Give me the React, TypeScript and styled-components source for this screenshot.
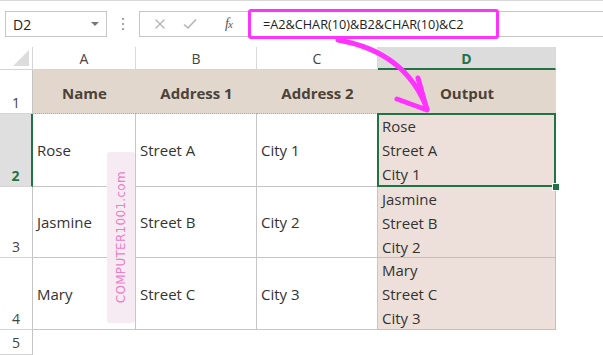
import React from 'react';
import styled, { createGlobalStyle, css } from 'styled-components';

const GREEN = '#217346';
const MAGENTA = '#ff33ff';

const GlobalStyle = createGlobalStyle`
  html, body { margin: 0; padding: 0; background: #fff; }
  body { width: 603px; height: 355px; overflow: hidden; font-family: "Open Sans", "Noto Sans", sans-serif; }
  * { box-sizing: border-box; }
`;

const Page = styled.div`
  position: relative;
  width: 603px;
  height: 355px;
  overflow: hidden;
  background: #fff;
  border-top: 1px solid #d8d8d8;
`;

const FormulaBar = styled.div`
  display: flex;
  align-items: flex-start;
  height: 46px;
  padding: 10px 0 0 5px;
`;

const NameBox = styled.div`
  width: 102px;
  height: 26px;
  border: 1px solid #c6c6c6;
  display: flex;
  align-items: center;
  justify-content: space-between;
  padding: 0 7px 0 7px;
  font-size: 14px;
  color: #222;
`;

const DropArrow = styled.span`
  width: 0;
  height: 0;
  border-left: 4px solid transparent;
  border-right: 4px solid transparent;
  border-top: 4px solid #777;
`;

const Grip = styled.div`
  width: 32px;
  height: 26px;
  display: flex;
  flex-direction: column;
  align-items: center;
  justify-content: center;
  gap: 3px;
`;

const GripDot = styled.span`
  width: 2px;
  height: 2px;
  background: #a6a6a6;
`;

const FxBox = styled.div`
  width: 109px;
  height: 26px;
  border: 1px solid #c6c6c6;
  border-right: none;
  display: flex;
  align-items: center;
  padding-left: 14px;
  gap: 17px;
`;

const FxLabel = styled.span`
  font-family: "Liberation Serif", "DejaVu Serif", serif;
  font-style: italic;
  font-size: 14px;
  color: #555;
  margin-left: 11px;
  letter-spacing: -1px;
`;

const FxSub = styled.span`
  font-size: 11px;
`;

const FormulaField = styled.div`
  flex: 1;
  height: 26px;
  border-top: 1px solid #c6c6c6;
  border-bottom: 1px solid #c6c6c6;
  display: flex;
  align-items: flex-start;
`;

const Highlight = styled.div`
  width: 251px;
  height: 30px;
  margin-top: -3px;
  border: 3px solid ${MAGENTA};
  border-radius: 3px;
  display: flex;
  align-items: center;
  padding-left: 12px;
  font-size: 12.7px;
  color: #222;
  white-space: nowrap;
`;

const Sheet = styled.div`
  display: grid;
  grid-template-columns: 33px 103px 121px 121px 178px 1fr;
  grid-template-rows: 23px 44px 73px 71px 72px 1fr;
  height: 308px;
`;

const Corner = styled.div`
  border-right: 1px solid #d4d4d4;
  border-bottom: 1px solid #d4d4d4;
  display: flex;
  align-items: flex-end;
  justify-content: flex-end;
  padding: 0 3px 3px 0;
`;

const CornerTri = styled.span`
  width: 0;
  height: 0;
  border-left: 16px solid transparent;
  border-bottom: 16px solid #dcdcdc;
`;

const ColHeader = styled.div<{ $selected?: boolean }>`
  border-right: 1px solid #d9d9d9;
  border-bottom: 1px solid #d4d4d4;
  display: flex;
  align-items: center;
  justify-content: center;
  font-size: 14px;
  color: #444;
  ${(p) =>
    p.$selected &&
    css`
      background: #dcdcdc;
      border-bottom: 2px solid ${GREEN};
      color: ${GREEN};
      font-weight: 700;
      padding-top: 1px;
    `}
`;

const BlankHeader = styled.div``;

const RowHeader = styled.div<{ $selected?: boolean; $center?: boolean }>`
  border-right: 1px solid #c4c4c4;
  border-bottom: 1px solid #d4d4d4;
  display: flex;
  justify-content: center;
  align-items: ${(p) => (p.$center ? 'center' : 'flex-end')};
  padding-bottom: ${(p) => (p.$center ? '0' : '1px')};
  font-size: 14px;
  color: #444;
  ${(p) =>
    p.$selected &&
    css`
      background: #dfdfdf;
      border-right: 2px solid ${GREEN};
      color: ${GREEN};
      font-weight: 700;
    `}
`;

const HeadCell = styled.div`
  background: #e2d7cd;
  border-bottom: 1px dotted #a9a9a9;
  display: flex;
  align-items: center;
  justify-content: center;
  font-size: 15px;
  font-weight: 700;
  color: #4b4238;
  padding-top: 2px;
`;

const Cell = styled.div`
  border-right: 1px solid #c6c6c6;
  border-bottom: 1px solid #c6c6c6;
  display: flex;
  align-items: center;
  padding-left: 4px;
  font-size: 15px;
  color: #333;
`;

const OutputCell = styled.div<{ $active?: boolean }>`
  position: relative;
  background: #ede0db;
  border-right: 1px solid #c0c0c0;
  border-bottom: 1px solid #c0c0c0;
  padding: 0 4px;
  font-size: 15px;
  line-height: 24px;
  color: #333;
  ${(p) =>
    p.$active &&
    css`
      z-index: 2;
      &::after {
        content: '';
        position: absolute;
        inset: -1px -1px -1px -1px;
        border: 2px solid ${GREEN};
        pointer-events: none;
      }
    `}
`;

const FillHandle = styled.span`
  position: absolute;
  right: -4px;
  bottom: -4px;
  width: 6px;
  height: 6px;
  background: ${GREEN};
  outline: 1px solid #fff;
  z-index: 3;
`;

const Line = styled.div`
  white-space: nowrap;
`;

const Empty = styled.div``;

const Watermark = styled.div`
  position: absolute;
  left: 107px;
  top: 151px;
  width: 28px;
  height: 171px;
  background: #f6eaf3;
  border-radius: 3px;
  display: flex;
  align-items: center;
  justify-content: center;
`;

const WatermarkText = styled.span`
  writing-mode: vertical-rl;
  transform: rotate(180deg);
  font-family: "DejaVu Sans", "Noto Sans", sans-serif;
  font-size: 12px;
  letter-spacing: 0.3px;
  color: #ec80c6;
  white-space: nowrap;
`;

const ArrowLayer = styled.svg`
  position: absolute;
  left: 0;
  top: 0;
  pointer-events: none;
  z-index: 5;
`;

const rows = [
  { n: 2, name: 'Rose', street: 'Street A', city: 'City 1' },
  { n: 3, name: 'Jasmine', street: 'Street B', city: 'City 2' },
  { n: 4, name: 'Mary', street: 'Street C', city: 'City 3' },
];

export default function App() {
  return (
    <>
      <GlobalStyle />
      <Page>
        <FormulaBar>
          <NameBox>
            <span>D2</span>
            <DropArrow />
          </NameBox>
          <Grip>
            <GripDot />
            <GripDot />
            <GripDot />
          </Grip>
          <FxBox>
            <svg width="12" height="12" viewBox="0 0 12 12">
              <path d="M1.5 1.5 L10.5 10.5 M10.5 1.5 L1.5 10.5" stroke="#b4b4b4" strokeWidth="1.3" fill="none" />
            </svg>
            <svg width="14" height="12" viewBox="0 0 14 12">
              <path d="M1 6.5 L5 10 L13 1.5" stroke="#b4b4b4" strokeWidth="1.6" fill="none" />
            </svg>
            <FxLabel>
              f<FxSub>x</FxSub>
            </FxLabel>
          </FxBox>
          <FormulaField>
            <Highlight>=A2&amp;CHAR(10)&amp;B2&amp;CHAR(10)&amp;C2</Highlight>
          </FormulaField>
        </FormulaBar>

        <Sheet>
          <Corner>
            <CornerTri />
          </Corner>
          <ColHeader>A</ColHeader>
          <ColHeader>B</ColHeader>
          <ColHeader>C</ColHeader>
          <ColHeader $selected>D</ColHeader>
          <BlankHeader />

          <RowHeader>1</RowHeader>
          <HeadCell>Name</HeadCell>
          <HeadCell>Address 1</HeadCell>
          <HeadCell>Address 2</HeadCell>
          <HeadCell>Output</HeadCell>
          <Empty />

          {rows.map((r) => (
            <React.Fragment key={r.n}>
              <RowHeader $selected={r.n === 2}>{r.n}</RowHeader>
              <Cell>{r.name}</Cell>
              <Cell>{r.street}</Cell>
              <Cell>{r.city}</Cell>
              <OutputCell $active={r.n === 2}>
                <Line>{r.name}</Line>
                <Line>{r.street}</Line>
                <Line>{r.city}</Line>
                {r.n === 2 && <FillHandle />}
              </OutputCell>
              <Empty />
            </React.Fragment>
          ))}

          <RowHeader $center>5</RowHeader>
          <Empty />
          <Empty />
          <Empty />
          <Empty />
          <Empty />
        </Sheet>

        <Watermark>
          <WatermarkText>COMPUTER1001.com</WatermarkText>
        </Watermark>

        <ArrowLayer width="603" height="355" viewBox="0 0 603 355">
          <path
            d="M338 39 C 372 45, 410 62, 427 108"
            stroke={MAGENTA}
            strokeWidth="5"
            strokeLinecap="round"
            fill="none"
          />
          <path
            d="M397 98 L427 109 L418 77"
            stroke={MAGENTA}
            strokeWidth="5"
            strokeLinecap="round"
            strokeLinejoin="round"
            fill="none"
          />
        </ArrowLayer>
      </Page>
    </>
  );
}
